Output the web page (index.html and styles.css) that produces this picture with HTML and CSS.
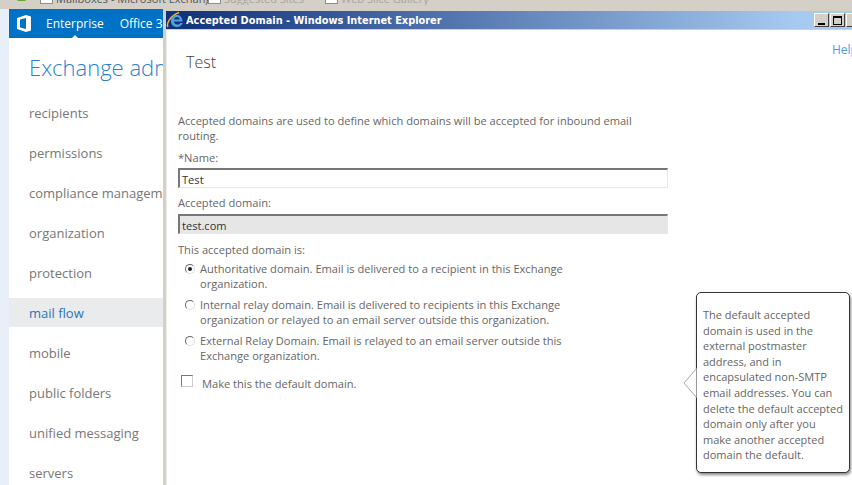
FILE: index.html
```html
<!DOCTYPE html>
<html lang="en">
<head>
<meta charset="utf-8">
<title>Accepted Domain</title>
<link rel="stylesheet" href="styles.css">
</head>
<body>
<div class="bookmarks">
  <svg class="fav" width="16" height="9" viewBox="0 0 16 9"><path d="M1 3h5l1-3h3l1 3h3l-3 3H4z" fill="#6aa52c"/><path d="M10 0h3l2 3h-4z" fill="#e3a92b"/></svg>
  <span class="bm bm-first"><i class="page"></i><span class="bm-text">Mailboxes - Microsoft Exchange</span></span>
  <span class="bm bm-faded"><i class="page"></i><span class="bm-text">Suggested Sites</span></span>
  <span class="bm bm-faded"><i class="page"></i><span class="bm-text">Web Slice Gallery</span></span>
</div>
<div class="shell">
  <div class="edge"></div>
  <div class="eac">
    <div class="suite">
      <svg class="office" width="14" height="17" viewBox="0 0 14 17"><path fill-rule="evenodd" d="M0 3 9 0l5 1.500v14L9 17 0 14ZM3 4.500 9 3v11l-6-1.500Z" fill="#fff"/></svg>
      <span class="suite-link suite-active">Enterprise</span>
      <span class="suite-link">Office 365</span>
    </div>
    <h1 class="eac-title">Exchange admin center</h1>
    <nav class="nav">
      <a class="nav-item">recipients</a>
      <a class="nav-item">permissions</a>
      <a class="nav-item">compliance management</a>
      <a class="nav-item">organization</a>
      <a class="nav-item">protection</a>
      <a class="nav-item nav-current">mail flow</a>
      <a class="nav-item">mobile</a>
      <a class="nav-item">public folders</a>
      <a class="nav-item">unified messaging</a>
      <a class="nav-item">servers</a>
    </nav>
  </div>
</div>

<section class="window">
  <header class="titlebar">
    <svg class="ie" width="20" height="18" viewBox="0 0 20 18">
      <path d="M2 16C0 13 4 5 13 1.500" fill="none" stroke="#e8b93a" stroke-width="1.500"/>
      <path d="M5 9.500C5.500 6 8 4 11 4s5.500 2.500 5.500 6.500H8c.3 2 1.500 3 3.300 3 1.300 0 2.300-.5 3-1.500h2.400c-1 2.700-3 4-5.500 4C7.500 16 4.500 13.500 5 9.500ZM8 8.500h5.800C13.500 7 12.500 6 11 6S8.400 7 8 8.500Z" fill="#4f9fe0"/>
    </svg>
    <span class="title-text">Accepted Domain - Windows Internet Explorer</span>
    <span class="controls">
      <span class="ctl"><i class="ctl-min"></i></span>
      <span class="ctl"><i class="ctl-max"></i></span>
      <span class="ctl ctl-close"></span>
    </span>
  </header>
  <div class="dialog">
    <div class="dialog-head">
      <h2 class="dialog-title">Test</h2>
      <a class="help">Help</a>
    </div>
    <form class="form">
      <p class="intro">Accepted domains are used to define which domains will be accepted for inbound email routing.</p>
      <label class="field-label">*Name:</label>
      <div class="textbox">Test</div>
      <label class="field-label field-second">Accepted domain:</label>
      <div class="textbox textbox-off">test.com</div>
      <p class="group-label">This accepted domain is:</p>
      <div class="radio"><i class="dot dot-on"></i><span>Authoritative domain. Email is delivered to a recipient in this Exchange organization.</span></div>
      <div class="radio"><i class="dot"></i><span>Internal relay domain. Email is delivered to recipients in this Exchange organization or relayed to an email server outside this organization.</span></div>
      <div class="radio"><i class="dot"></i><span>External Relay Domain. Email is relayed to an email server outside this Exchange organization.</span></div>
      <div class="check"><i class="box"></i><span>Make this the default domain.</span></div>
    </form>
  </div>
  <aside class="callout">
    <svg class="callout-tip" width="14" height="30" viewBox="0 0 14 30"><path d="M13.500 .5 1 15l12.500 14.500" fill="#fff" stroke="#a8a8a8"/></svg>
    The default accepted domain is used in the external postmaster address, and in encapsulated non-SMTP email addresses. You can delete the default accepted domain only after you make another accepted domain the default.
  </aside>
</section>
</body>
</html>
```
FILE: styles.css
```css
* { box-sizing: border-box; }
html, body { margin: 0; padding: 0; }
body {
  position: relative;
  width: 852px;
  height: 485px;
  overflow: hidden;
  background: #fff;
  font-family: "Open Sans", "Noto Sans", sans-serif;
  color: #666;
}
.bookmarks {
  display: flex;
  align-items: flex-start;
  height: 9px;
  overflow: hidden;
  background: #d4d0c8;
  padding-left: 14px;
  font-size: 11px;
  line-height: 13px;
  color: #555;
}
.fav { flex: none; margin: -5px 10px 0 0; }
.bm { display: flex; flex: none; gap: 3px; align-items: flex-start; overflow: hidden; white-space: nowrap; }
.bm-text { margin-top: -8px; }
.bm-first { width: 168px; }
.bm-faded { color: #a8a49c; width: 117px; }
.page { display: block; flex: none; width: 13px; height: 9px; margin-top: -5px; background: #fff; border: 1px solid #8d8d8d; }
.shell { display: flex; height: 476px; }
.edge { width: 9px; background: #e9eff8; }
.eac { flex: none; width: 154px; overflow: hidden; }
.suite {
  display: flex;
  align-items: center;
  height: 29px;
  background: #0072c6;
  color: #fff;
  font-size: 12px;
  white-space: nowrap;
}
.office { margin: 0 15px 0 8px; flex: none; }
.suite-link { margin-right: 16px; position: relative; }
.suite-active::after {
  content: "";
  position: absolute;
  left: 50%;
  bottom: -7px;
  margin-left: -4px;
  border: 4px solid transparent;
  border-top: 0;
  border-bottom-color: #fff;
}
.eac-title {
  margin: 0;
  padding: 14px 0 0 20px;
  height: 56px;
  font-size: 22px;
  line-height: 30px;
  font-weight: 300;
  color: #2b7fd0;
  white-space: nowrap;
}
.nav { display: flex; flex-direction: column; padding-top: 4px; }
.nav-item {
  display: block;
  height: 40px;
  padding: 0 0 0 20px;
  font-size: 13px;
  line-height: 30px;
  color: #777;
  white-space: nowrap;
  overflow: hidden;
}
.nav-current { height: 29px; margin: 0 0 11px; background: #eaebed; color: #2a74bb; }
.window {
  position: absolute;
  left: 163px;
  top: 8px;
  width: 689px;
  height: 477px;
  background: #fff;
  border-left: 3px solid #d4d0c8;
  border-top: 3px solid #d4d0c8;
  box-shadow: inset 1px 0 0 #efedea, inset 0 1px 0 #efedea;
}
.titlebar {
  display: flex;
  align-items: center;
  height: 19px;
  background: linear-gradient(90deg, #0f2f78 0%, #a6caf0 92%);
  border-bottom: 1px solid #cfd0d0;
  color: #fff;
  font: 700 9.800px "DejaVu Sans", sans-serif;
  white-space: nowrap;
}
.ie { flex: none; }
.title-text { flex: 1; }
.controls { display: flex; flex: none; width: 38px; overflow: hidden; gap: 1px; }
.ctl {
  display: flex;
  align-items: center;
  justify-content: center;
  flex: none;
  width: 15px;
  height: 14px;
  background: #d4d0c8;
  border: 1px solid;
  border-color: #fff #404040 #404040 #fff;
}
.ctl-min { width: 7px; height: 2px; background: #000; margin-top: 7px; }
.ctl-max { width: 9px; height: 9px; border: 2px solid #000; border-width: 2px 1px 1px; }
.dialog-head { display: flex; justify-content: space-between; height: 83px; padding-left: 20px; }
.dialog-title { margin: 0; padding-top: 20px; font-size: 16px; line-height: 24px; font-weight: 300; color: #444; }
.help { font-size: 12px; line-height: 16px; padding-top: 12px; color: #4a9be8; width: 20px; overflow: hidden; }
.form { width: 493px; padding-left: 12px; font-size: 11.100px; line-height: 15px; color: #666; }
.intro { margin: 0 0 7px; width: 470px; }
.field-label { display: block; height: 16px; }
.field-second { margin-top: 7px; }
.textbox {
  height: 20px;
  margin-top: 2px;
  padding-left: 2px;
  border: 2px solid #777;
  border-right: 1px solid #e8e8e8;
  border-bottom: 1px solid #e8e8e8;
  color: #333;
  line-height: 19px;
  width: 490px;
}
.field-second + .textbox { margin-top: 3px; }
.textbox-off { background: #e6e6e6; }
.group-label { margin: 8px 0 4px; }
.radio { display: flex; width: 395px; margin-bottom: 6px; }
.dot {
  flex: none;
  width: 10px;
  height: 10px;
  margin: 3px 5px 0 7px;
  border-radius: 50%;
  background: #fff;
  border: 1px solid;
  border-color: #666 #ddd #ddd #666;
  position: relative;
}
.dot-on::after {
  content: "";
  position: absolute;
  left: 2px;
  top: 2px;
  width: 4px;
  height: 4px;
  border-radius: 50%;
  background: #222;
}
.check { display: flex; align-items: flex-start; margin-top: 13px; }
.box { flex: none; width: 12px; height: 12px; margin: -1px 9px 0 3px; border: 1px solid; border-color: #777 #ccc #ccc #777; }
.callout {
  position: absolute;
  left: 530px;
  top: 281px;
  width: 154px;
  height: 181px;
  padding: 14px 4px 0 6px;
  background: #fff;
  border: 1px solid #333;
  border-radius: 5px;
  box-shadow: 1px 2px 3px #888;
  font-size: 11px;
  line-height: 15.600px;
  color: #666;
}
.callout-tip { position: absolute; left: -14px; top: 75px; }
```
